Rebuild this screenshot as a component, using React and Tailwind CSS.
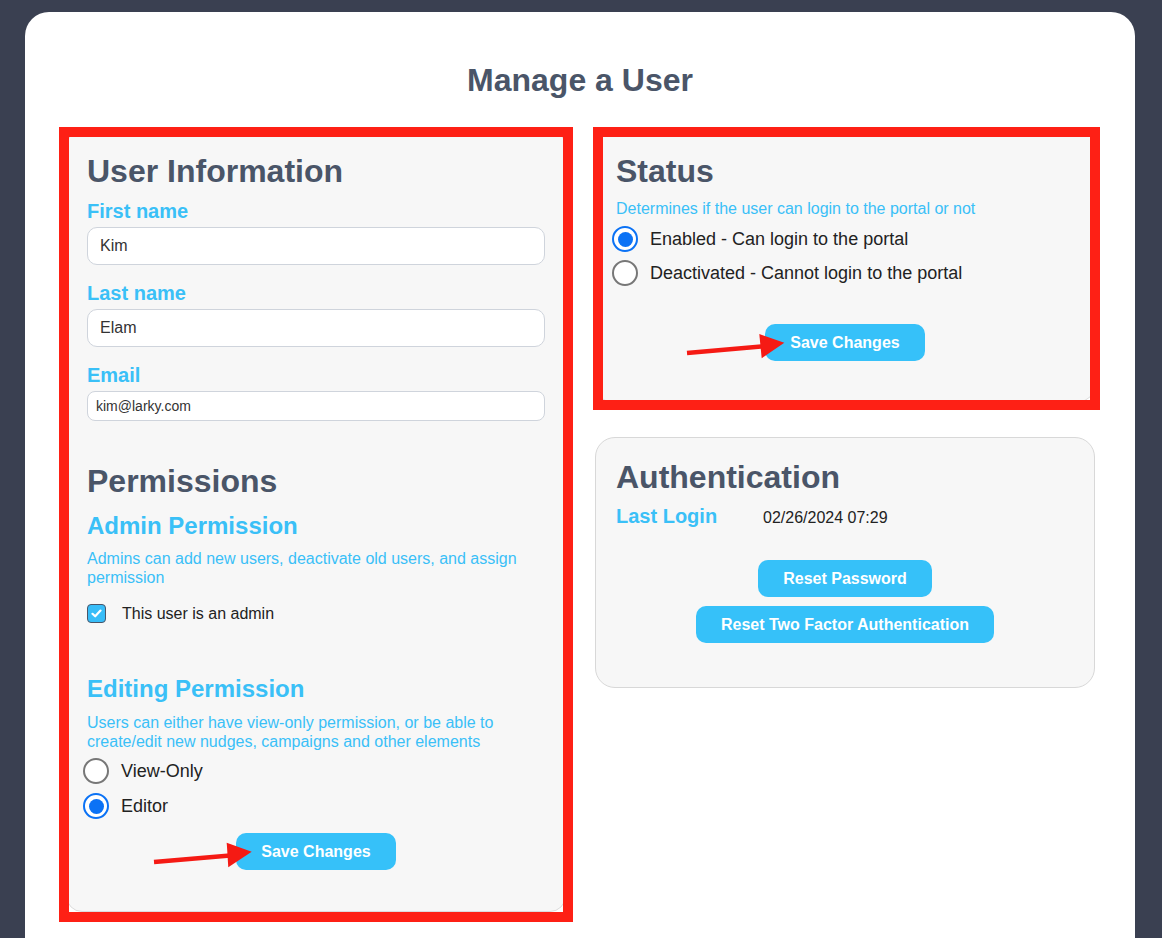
import React from "react";

function Radio({ checked, label }) {
  return (
    <div className="flex h-[26px] items-center">
      {checked ? (
        <span className="-ml-[4px] flex h-[26px] w-[26px] items-center justify-center rounded-full border-[2.5px] border-[#0b72f5] bg-white">
          <span className="h-[15px] w-[15px] rounded-full bg-[#0b72f5]" />
        </span>
      ) : (
        <span className="-ml-[4px] h-[26px] w-[26px] rounded-full border-2 border-[#777] bg-white" />
      )}
      <span className="ml-3 text-[18px] leading-[26px] text-[#222]">{label}</span>
    </div>
  );
}

function Button({ children }) {
  return (
    <button className="h-[37px] rounded-[10px] bg-[#36c1f9] px-[25px] text-[16px] font-bold text-white">
      {children}
    </button>
  );
}

function Field({ label, value, first }) {
  return (
    <div className={first ? "mt-[9px]" : "mt-4"}>
      <div className="text-[20px] font-bold leading-[24px] text-[#3ac0f7]">{label}</div>
      <div className="mt-1 flex h-[38px] items-center rounded-[10px] border border-[#cfd4dc] bg-white pl-3 text-[16px] text-[#333]">
        {value}
      </div>
    </div>
  );
}

function Arrow({ x1, y1, x2, y2, head }) {
  // red annotation arrow, coordinates in panel px
  return (
    <svg className="pointer-events-none absolute left-0 top-0 h-full w-full overflow-visible">
      <line x1={x1} y1={y1} x2={x2} y2={y2} stroke="#f51a14" strokeWidth="4.5" />
      <polygon points={head} fill="#f51a14" />
    </svg>
  );
}

export default function App() {
  return (
    <div className="min-h-screen bg-[#3a4051] pl-[25px] pr-[27px] pt-3 font-['Liberation_Sans',Arial,sans-serif]">
      <div className="min-h-[960px] rounded-t-[24px] bg-white pt-[49px]">
        <h1 className="text-center text-[32px] font-bold leading-[38px] text-[#4a5568]">Manage a User</h1>

        <div className="mt-[31px] flex gap-[29px] pl-[41px]">
          {/* left column */}
          <div className="relative w-[500px] self-start">
            <div className="rounded-2xl border border-[#dcdcdc] bg-[#f7f7f7] px-5 pb-[41px] pt-[21px]">
              <h2 className="text-[32px] font-bold leading-[38px] text-[#4a5568]">User Information</h2>
              <Field first label="First name" value="Kim" />
              <Field label="Last name" value="Elam" />
              <div className="mt-4">
                <div className="text-[20px] font-bold leading-[24px] text-[#3ac0f7]">Email</div>
                <div className="mt-1 flex h-[30px] items-center rounded-[8px] border border-[#cfd4dc] bg-white pl-2 text-[14px] text-[#333]">
                  kim@larky.com
                </div>
              </div>

              <h2 className="mt-[41px] text-[32px] font-bold leading-[38px] text-[#4a5568]">Permissions</h2>
              <h3 className="mt-3 text-[24px] font-bold leading-[28px] text-[#3ac0f7]">Admin Permission</h3>
              <p className="mt-[9px] text-[16px] leading-[19px] text-[#3ac0f7]">
                Admins can add new users, deactivate old users, and assign permission
              </p>
              <div className="mt-[17px] flex h-[19px] items-center">
                <span className="flex h-[19px] w-[19px] items-center justify-center rounded-[4px] border-[1.5px] border-[#4a5568] bg-[#38bdf8]">
                  <svg width="11" height="9" viewBox="0 0 11 9">
                    <path d="M1.5 4.8 L4.2 7.3 L9.5 1.6" fill="none" stroke="white" strokeWidth="2.2" strokeLinecap="round" strokeLinejoin="round" />
                  </svg>
                </span>
                <span className="ml-4 text-[16px] leading-[19px] text-[#222]">This user is an admin</span>
              </div>

              <h3 className="mt-[52px] text-[24px] font-bold leading-[28px] text-[#3ac0f7]">Editing Permission</h3>
              <p className="mt-[10px] text-[16px] leading-[19px] text-[#3ac0f7]">
                Users can either have view-only permission, or be able to create/edit new nudges, campaigns and other elements
              </p>
              <div className="mt-[7px] flex flex-col gap-[9px]">
                <Radio label="View-Only" />
                <Radio checked label="Editor" />
              </div>
              <div className="mt-[14px] flex justify-center">
                <Button>Save Changes</Button>
              </div>
            </div>
            <div className="pointer-events-none absolute -bottom-[10px] -left-[7px] -right-[7px] -top-[3px] border-[10px] border-[#fe2015]" />
            <Arrow x1={88} y1={732} x2={170} y2={725} head="160.7,712.7 162.3,737.3 185.7,721.7" />
          </div>

          {/* right column */}
          <div className="w-[500px] self-start">
            <div className="relative">
              <div className="rounded-2xl border border-[#dcdcdc] bg-[#f7f7f7] px-5 pb-10 pt-[21px]">
                <h2 className="text-[32px] font-bold leading-[38px] text-[#4a5568]">Status</h2>
                <p className="mt-[9px] text-[16px] leading-[19px] text-[#3ac0f7]">
                  Determines if the user can login to the portal or not
                </p>
                <div className="mt-2 flex flex-col gap-2">
                  <Radio checked label="Enabled - Can login to the portal" />
                  <Radio label="Deactivated - Cannot login to the portal" />
                </div>
                <div className="mt-[38px] flex justify-center">
                  <Button>Save Changes</Button>
                </div>
              </div>
              <div className="pointer-events-none absolute -bottom-[8px] -left-[2px] -right-[5px] -top-[3px] border-[10px] border-[#fe2015]" />
              <Arrow x1={92} y1={223} x2={172} y2={216} head="164.3,204 166.7,228.3 189.3,212.7" />
            </div>

            <div className="mt-[35px] rounded-[20px] border border-[#d8d8d8] bg-[#f7f7f7] px-5 pb-[44px] pt-[20px]">
              <h2 className="text-[32px] font-bold leading-[38px] text-[#4a5568]">Authentication</h2>
              <div className="mt-2 flex items-baseline">
                <span className="w-[147px] text-[20px] font-bold leading-[24px] text-[#3ac0f7]">Last Login</span>
                <span className="text-[16px] text-[#222]">02/26/2024 07:29</span>
              </div>
              <div className="mt-[30px] flex flex-col items-center gap-[9px]">
                <Button>Reset Password</Button>
                <Button>Reset Two Factor Authentication</Button>
              </div>
            </div>
          </div>
        </div>
      </div>
    </div>
  );
}
